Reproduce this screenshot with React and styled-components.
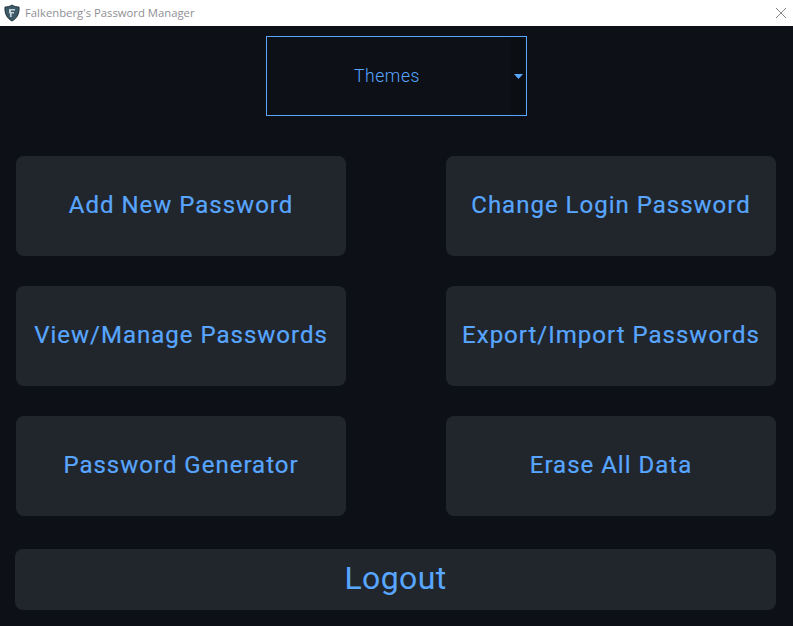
import React from "react";
import styled, { createGlobalStyle } from "styled-components";

const Global = createGlobalStyle`
  html, body { margin: 0; padding: 0; background: #0d1117; }
  * { box-sizing: border-box; }
`;

const Window = styled.div`
  width: 793px;
  height: 626px;
  display: flex;
  flex-direction: column;
  background: #0d1117;
  overflow: hidden;
`;

const TitleBar = styled.header`
  height: 26px;
  background: #ffffff;
  display: flex;
  align-items: center;
  padding: 0 6px 0 4px;
  gap: 5px;
`;

const TitleText = styled.span`
  flex: 1;
  font: 11.3px "Open Sans", "Liberation Sans", sans-serif;
  color: #8f8f96;
  position: relative;
  top: -1px;
`;

const Main = styled.main`
  flex: 1;
  display: flex;
  flex-direction: column;
  padding: 10px 17px 16px 15px;
`;

const ThemeSelect = styled.div`
  align-self: center;
  width: 261px;
  height: 80px;
  margin-left: 1px;
  border: 1px solid #58a6ff;
  display: flex;
  align-items: center;
  position: relative;
  justify-content: center;
  padding: 0 18px 1px 0;
  font: 17.5px "Roboto", sans-serif;
  font-weight: 300;
  letter-spacing: 0.6px;
  color: #58a6ff;
`;

const ArrowZone = styled.span`
  position: absolute;
  top: 0;
  right: 1px;
  width: 14px;
  height: 76px;
  background: #0b0f14;
`;

const Caret = styled.svg`
  position: absolute;
  right: 3px;
  top: 37px;
`;

const Grid = styled.div`
  display: grid;
  grid-template-columns: 330px 330px;
  grid-auto-rows: 100px;
  column-gap: 100px;
  row-gap: 30px;
  margin: 40px 0 33px 1px;
`;

const ActionButton = styled.button`
  border: 0;
  border-radius: 8px;
  background: #21262d;
  color: #58a6ff;
  font: 400 24px "Roboto", sans-serif;
  letter-spacing: 1px;
  padding: 0 0 3px;
  white-space: nowrap;
  -webkit-text-stroke: 0.2px #58a6ff;
`;

const LogoutButton = styled(ActionButton)`
  height: 61px;
  width: 761px;
  font: 400 32px "Roboto", sans-serif;
  letter-spacing: 0.4px;
  -webkit-text-stroke: 0;
`;

const labels = [
  "Add New Password",
  "Change Login Password",
  "View/Manage Passwords",
  "Export/Import Passwords",
  "Password Generator",
  "Erase All Data",
];

export default function App() {
  return (
    <Window>
      <Global />
      <TitleBar>
        <svg width="16" height="18" viewBox="0 0 16 18">
          <path d="M8 1 C10 2.5 13 3 15 3 C15.5 9 13.5 14 8 17 C2.5 14 .5 9 1 3 C3 3 6 2.5 8 1 Z" fill="#3d5a68" stroke="#24333d" />
          <path d="M5 5 H11 V6.6 H7 V8 H10 V9.6 H7.6 V13 H6 V9.6 H5 Z" fill="#c9d3d9" />
        </svg>
        <TitleText>Falkenberg's Password Manager</TitleText>
        <svg width="12" height="12" viewBox="0 0 12 12">
          <path d="M1 1 L11 11 M11 1 L1 11" stroke="#8a8a8a" strokeWidth="1" />
        </svg>
      </TitleBar>
      <Main>
        <ThemeSelect>
          Themes
          <ArrowZone />
          <Caret width="9" height="5" viewBox="0 0 9 5">
            <path d="M0 0 H9 L4.5 5 Z" fill="#58a6ff" />
          </Caret>
        </ThemeSelect>
        <Grid>
          {labels.map((l) => (
            <ActionButton key={l}>{l}</ActionButton>
          ))}
        </Grid>
        <LogoutButton>Logout</LogoutButton>
      </Main>
    </Window>
  );
}
